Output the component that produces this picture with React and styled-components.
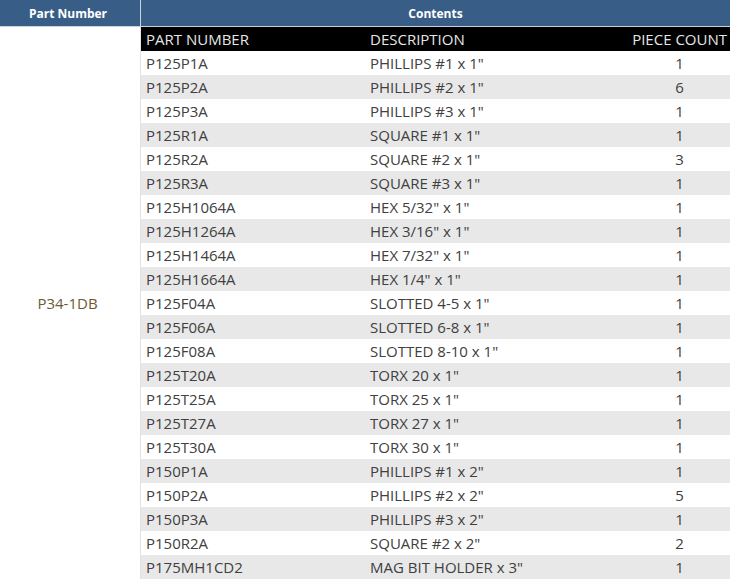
import styled, { createGlobalStyle } from 'styled-components'

const GlobalStyle = createGlobalStyle`
  body {
    margin: 0;
    background: #fff;
    font-family: "Open Sans", "Liberation Sans", sans-serif;
  }
`

const rows = [
  ['P125P1A', 'PHILLIPS #1 x 1"', 1],
  ['P125P2A', 'PHILLIPS #2 x 1"', 6],
  ['P125P3A', 'PHILLIPS #3 x 1"', 1],
  ['P125R1A', 'SQUARE #1 x 1"', 1],
  ['P125R2A', 'SQUARE #2 x 1"', 3],
  ['P125R3A', 'SQUARE #3 x 1"', 1],
  ['P125H1064A', 'HEX 5/32" x 1"', 1],
  ['P125H1264A', 'HEX 3/16" x 1"', 1],
  ['P125H1464A', 'HEX 7/32" x 1"', 1],
  ['P125H1664A', 'HEX 1/4" x 1"', 1],
  ['P125F04A', 'SLOTTED 4-5 x 1"', 1],
  ['P125F06A', 'SLOTTED 6-8 x 1"', 1],
  ['P125F08A', 'SLOTTED 8-10 x 1"', 1],
  ['P125T20A', 'TORX 20 x 1"', 1],
  ['P125T25A', 'TORX 25 x 1"', 1],
  ['P125T27A', 'TORX 27 x 1"', 1],
  ['P125T30A', 'TORX 30 x 1"', 1],
  ['P150P1A', 'PHILLIPS #1 x 2"', 1],
  ['P150P2A', 'PHILLIPS #2 x 2"', 5],
  ['P150P3A', 'PHILLIPS #3 x 2"', 1],
  ['P150R2A', 'SQUARE #2 x 2"', 2],
  ['P175MH1CD2', 'MAG BIT HOLDER x 3"', 1],
]

const Table = styled.div`
  display: grid;
  grid-template-columns: 141px minmax(0, 1fr);
  width: 730px;
  overflow: hidden;
`

const HeadCell = styled.div`
  background: #385e87;
  color: #fff;
  font-weight: 700;
  font-size: 12px;
  height: 26px;
  display: flex;
  align-items: center;
  justify-content: center;
  padding-right: ${(p) => (p.$divider ? '4px' : '0')};
  border-bottom: 1px solid #c9d3de;
  border-right: ${(p) => (p.$divider ? '1px solid #c9d3de' : 'none')};
`

const KitCell = styled.div`
  display: flex;
  align-items: center;
  justify-content: center;
  padding-right: 5px;
  color: #6b5a34;
  font-size: 15px;
  border-right: 1px solid #e2e2e2;
`

const Contents = styled.div`
  display: flex;
  flex-direction: column;
  min-width: 0;
`

const Row = styled.div`
  display: grid;
  grid-template-columns: 224px 264px minmax(0, 1fr);
  height: 24px;
  align-items: center;
  font-size: 15px;
  color: ${(p) => (p.$head ? '#e6e6e6' : '#404040')};
  background: ${(p) => (p.$head ? '#000' : p.$shade ? '#e8e8e8' : '#fff')};
`

const Cell = styled.div`
  display: flex;
  min-width: 0;
  padding: 0 5px;
  white-space: nowrap;
  justify-content: ${(p) =>
    p.$align === 'right' ? 'flex-end' : p.$align === 'center' ? 'center' : 'flex-start'};
  padding-left: ${(p) => (p.$align === 'right' ? '0' : '5px')};
  padding-right: ${(p) => (p.$align === 'right' ? '3px' : '5px')};
`

export default function App() {
  return (
    <>
      <GlobalStyle />
      <Table>
        <HeadCell $divider>Part Number</HeadCell>
        <HeadCell>Contents</HeadCell>
        <KitCell>P34-1DB</KitCell>
        <Contents>
          <Row $head>
            <Cell>PART NUMBER</Cell>
            <Cell>DESCRIPTION</Cell>
            <Cell $align="right">PIECE COUNT</Cell>
          </Row>
          {rows.map(([part, desc, count], i) => (
            <Row key={part} $shade={i % 2 === 1}>
              <Cell>{part}</Cell>
              <Cell>{desc}</Cell>
              <Cell $align="center">{count}</Cell>
            </Row>
          ))}
        </Contents>
      </Table>
    </>
  )
}
